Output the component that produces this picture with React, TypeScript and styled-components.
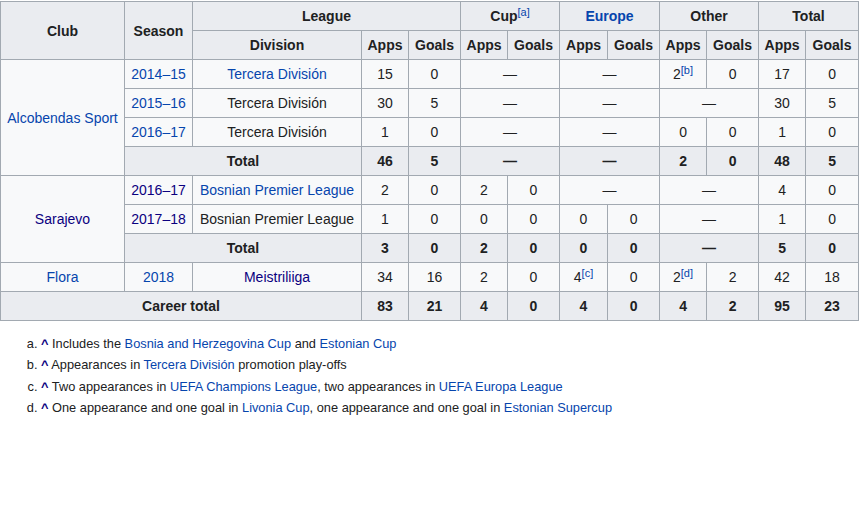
import React from "react";
import styled, { createGlobalStyle } from "styled-components";

const Global = createGlobalStyle`
  html, body { margin: 0; padding: 0; background: #ffffff; }
  body { font-family: "Liberation Sans", Arial, sans-serif; color: #202122; }
`;

const Page = styled.div`
  padding-top: 1px;
  width: 862px;
`;

const Table = styled.table`
  border-collapse: collapse;
  table-layout: fixed;
  width: 858px;
  background: #f8f9fa;
  color: #202122;
  font-size: 14px;
  border: 1px solid #a2a9b1;
  text-align: center;
`;

const Th = styled.th`
  background: #eaecf0;
  border: 1px solid #a2a9b1;
  font-weight: bold;
  padding: 3px 5px;
  line-height: 22px;
  height: 22px;
  white-space: nowrap;
  text-align: center;
`;

const Td = styled.td`
  border: 1px solid #a2a9b1;
  padding: 3px 5px;
  line-height: 22px;
  height: 22px;
  white-space: nowrap;
  text-align: center;
`;

const Link = styled.a<{ $visited?: boolean }>`
  color: ${(p) => (p.$visited ? "#0b0080" : "#0645ad")};
  text-decoration: none;
`;

const Sup = styled.sup`
  font-size: 11px;
  line-height: 1;
  vertical-align: 5px;
  font-weight: normal;
`;

const Notes = styled.ol`
  list-style-type: lower-alpha;
  margin: 13px 0 0 0;
  padding-left: 41px;
  font-size: 12.8px;
  line-height: 20px;
  color: #202122;
`;

const Note = styled.li`
  margin-bottom: 1.3px;
`;

const Caret = styled.b`
  color: #0b0080;
`;

const Ref = ({ n }: { n: string }) => (
  <Sup>
    <Link href="#">[{n}]</Link>
  </Sup>
);

const widths = [124, 68, 169, 47, 52, 47, 52, 48, 52, 47, 52, 47, 53];

export default function App() {
  return (
    <Page>
      <Global />
      <Table>
        <colgroup>
          {widths.map((w, i) => (
            <col key={i} style={{ width: w }} />
          ))}
        </colgroup>
        <tbody>
          <tr>
            <Th rowSpan={2}>Club</Th>
            <Th rowSpan={2}>Season</Th>
            <Th colSpan={3}>League</Th>
            <Th colSpan={2}>
              Cup
              <Ref n="a" />
            </Th>
            <Th colSpan={2}>
              <Link href="#">Europe</Link>
            </Th>
            <Th colSpan={2}>Other</Th>
            <Th colSpan={2}>Total</Th>
          </tr>
          <tr>
            <Th>Division</Th>
            <Th>Apps</Th>
            <Th>Goals</Th>
            <Th>Apps</Th>
            <Th>Goals</Th>
            <Th>Apps</Th>
            <Th>Goals</Th>
            <Th>Apps</Th>
            <Th>Goals</Th>
            <Th>Apps</Th>
            <Th>Goals</Th>
          </tr>
          <tr>
            <Td rowSpan={4}>
              <Link href="#">Alcobendas Sport</Link>
            </Td>
            <Td>
              <Link href="#">2014–15</Link>
            </Td>
            <Td>
              <Link href="#">Tercera División</Link>
            </Td>
            <Td>15</Td>
            <Td>0</Td>
            <Td colSpan={2}>—</Td>
            <Td colSpan={2}>—</Td>
            <Td>
              2<Ref n="b" />
            </Td>
            <Td>0</Td>
            <Td>17</Td>
            <Td>0</Td>
          </tr>
          <tr>
            <Td>
              <Link href="#">2015–16</Link>
            </Td>
            <Td>Tercera División</Td>
            <Td>30</Td>
            <Td>5</Td>
            <Td colSpan={2}>—</Td>
            <Td colSpan={2}>—</Td>
            <Td colSpan={2}>—</Td>
            <Td>30</Td>
            <Td>5</Td>
          </tr>
          <tr>
            <Td>
              <Link href="#">2016–17</Link>
            </Td>
            <Td>Tercera División</Td>
            <Td>1</Td>
            <Td>0</Td>
            <Td colSpan={2}>—</Td>
            <Td colSpan={2}>—</Td>
            <Td>0</Td>
            <Td>0</Td>
            <Td>1</Td>
            <Td>0</Td>
          </tr>
          <tr>
            <Th colSpan={2}>Total</Th>
            <Th>46</Th>
            <Th>5</Th>
            <Th colSpan={2}>—</Th>
            <Th colSpan={2}>—</Th>
            <Th>2</Th>
            <Th>0</Th>
            <Th>48</Th>
            <Th>5</Th>
          </tr>
          <tr>
            <Td rowSpan={3}>
              <Link href="#" $visited>
                Sarajevo
              </Link>
            </Td>
            <Td>
              <Link href="#" $visited>
                2016–17
              </Link>
            </Td>
            <Td>
              <Link href="#">Bosnian Premier League</Link>
            </Td>
            <Td>2</Td>
            <Td>0</Td>
            <Td>2</Td>
            <Td>0</Td>
            <Td colSpan={2}>—</Td>
            <Td colSpan={2}>—</Td>
            <Td>4</Td>
            <Td>0</Td>
          </tr>
          <tr>
            <Td>
              <Link href="#" $visited>
                2017–18
              </Link>
            </Td>
            <Td>Bosnian Premier League</Td>
            <Td>1</Td>
            <Td>0</Td>
            <Td>0</Td>
            <Td>0</Td>
            <Td>0</Td>
            <Td>0</Td>
            <Td colSpan={2}>—</Td>
            <Td>1</Td>
            <Td>0</Td>
          </tr>
          <tr>
            <Th colSpan={2}>Total</Th>
            <Th>3</Th>
            <Th>0</Th>
            <Th>2</Th>
            <Th>0</Th>
            <Th>0</Th>
            <Th>0</Th>
            <Th colSpan={2}>—</Th>
            <Th>5</Th>
            <Th>0</Th>
          </tr>
          <tr>
            <Td>
              <Link href="#">Flora</Link>
            </Td>
            <Td>
              <Link href="#">2018</Link>
            </Td>
            <Td>
              <Link href="#" $visited>
                Meistriliiga
              </Link>
            </Td>
            <Td>34</Td>
            <Td>16</Td>
            <Td>2</Td>
            <Td>0</Td>
            <Td>
              4<Ref n="c" />
            </Td>
            <Td>0</Td>
            <Td>
              2<Ref n="d" />
            </Td>
            <Td>2</Td>
            <Td>42</Td>
            <Td>18</Td>
          </tr>
          <tr>
            <Th colSpan={3}>Career total</Th>
            <Th>83</Th>
            <Th>21</Th>
            <Th>4</Th>
            <Th>0</Th>
            <Th>4</Th>
            <Th>0</Th>
            <Th>4</Th>
            <Th>2</Th>
            <Th>95</Th>
            <Th>23</Th>
          </tr>
        </tbody>
      </Table>
      <Notes>
        <Note>
          <Caret>^</Caret> Includes the <Link href="#">Bosnia and Herzegovina Cup</Link> and{" "}
          <Link href="#">Estonian Cup</Link>
        </Note>
        <Note>
          <Caret>^</Caret> Appearances in <Link href="#">Tercera División</Link> promotion play-offs
        </Note>
        <Note>
          <Caret>^</Caret> Two appearances in <Link href="#">UEFA Champions League</Link>, two
          appearances in <Link href="#">UEFA Europa League</Link>
        </Note>
        <Note>
          <Caret>^</Caret> One appearance and one goal in <Link href="#">Livonia Cup</Link>, one
          appearance and one goal in <Link href="#">Estonian Supercup</Link>
        </Note>
      </Notes>
    </Page>
  );
}
